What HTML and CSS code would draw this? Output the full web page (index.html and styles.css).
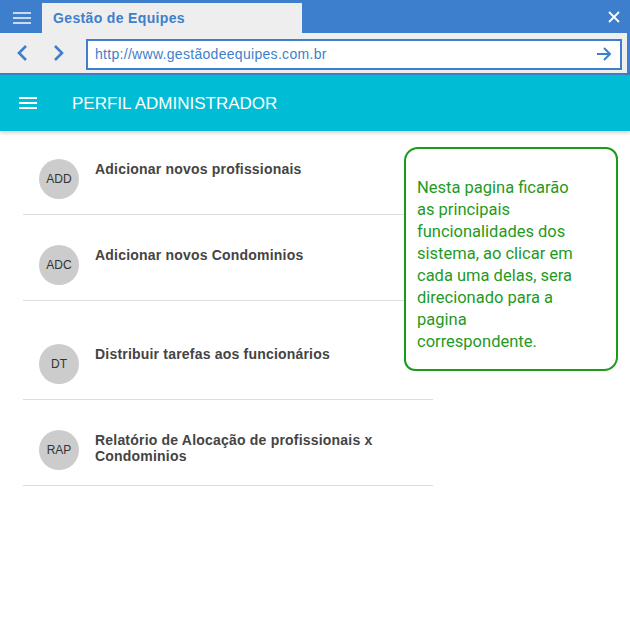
FILE: index.html
```html
<!DOCTYPE html>
<html lang="pt">
<head>
<meta charset="utf-8">
<title>Gestão de Equipes</title>
<link rel="stylesheet" href="styles.css">
</head>
<body>
<div class="window">
  <div class="titlebar">
    <div class="tb-menu">
      <svg width="18" height="12" viewBox="0 0 18 12"><path d="M0 1h18M0 6h18M0 11h18" stroke="#c9daf0" stroke-width="2"/></svg>
    </div>
    <div class="tab">Gestão de Equipes</div>
    <div class="tb-close">
      <svg width="12" height="12" viewBox="0 0 12 12"><path d="M1 1l10 10M11 1L1 11" stroke="#fff" stroke-width="1.8"/></svg>
    </div>
  </div>
  <div class="navbar">
    <div class="nav-btn">
      <svg width="12" height="18" viewBox="0 0 12 18"><path d="M10 2L3 9l7 7" fill="none" stroke="#3d7fcc" stroke-width="2.6"/></svg>
    </div>
    <div class="nav-btn">
      <svg width="12" height="18" viewBox="0 0 12 18"><path d="M2 2l7 7-7 7" fill="none" stroke="#3d7fcc" stroke-width="2.6"/></svg>
    </div>
    <div class="url">
      <span class="url-text">http://www.gestãodeequipes.com.br</span>
      <svg width="16" height="14" viewBox="0 0 16 14"><path d="M1 7h13M8 1l6 6-6 6" fill="none" stroke="#3d7fcc" stroke-width="2"/></svg>
    </div>
  </div>
  <div class="appbar">
    <svg class="app-menu" width="18" height="12" viewBox="0 0 18 12"><path d="M0 1h18M0 6h18M0 11h18" stroke="#fff" stroke-width="2"/></svg>
    <span class="app-title">PERFIL ADMINISTRADOR</span>
  </div>
  <div class="content">
    <ul class="list">
      <li class="item item-a">
        <span class="avatar">ADD</span>
        <span class="label">Adicionar novos profissionais</span>
      </li>
      <li class="item item-b">
        <span class="avatar">ADC</span>
        <span class="label">Adicionar novos Condominios</span>
      </li>
      <li class="item item-c">
        <span class="avatar">DT</span>
        <span class="label">Distribuir tarefas aos funcionários</span>
      </li>
      <li class="item item-b">
        <span class="avatar">RAP</span>
        <span class="label">Relatório de Alocação de profissionais x Condominios</span>
      </li>
    </ul>
    <div class="note">
      <p>Nesta pagina ficarão as principais funcionalidades dos sistema, ao clicar em cada uma delas, sera direcionado para a pagina correspondente.</p>
    </div>
  </div>
</div>
</body>
</html>
```
FILE: styles.css
```css
* { box-sizing: border-box; }
html, body { margin: 0; padding: 0; background: #fff; }
body { font-family: "Liberation Sans", Arial, sans-serif; width: 630px; height: 624px; overflow: hidden; }

.window { width: 630px; height: 624px; position: relative; }

.titlebar {
  height: 33px;
  background: #3d7fcc;
  display: flex;
  align-items: flex-end;
}
.tb-menu { width: 42px; height: 33px; display: flex; align-items: center; justify-content: center; padding-left: 2px; padding-top: 2px; }
.tab {
  width: 260px;
  height: 30px;
  background: #eeeeee;
  color: #3d7fcc;
  font-weight: bold;
  font-size: 14px;
  letter-spacing: 0.35px;
  padding: 7px 0 0 11px;
}
.tb-close { margin-left: auto; width: 30px; height: 33px; display: flex; align-items: center; justify-content: center; padding-right: 2px; }

.navbar {
  height: 42px;
  background: #eeeeee;
  border-right: 3px solid #3d7fcc;
  border-bottom: 2px solid #3d7fcc;
  display: flex;
  align-items: center;
  padding: 2px 5px 0 16px;
}
.nav-btn { width: 37px; display: flex; align-items: center; padding-bottom: 2px; }
.url {
  flex: 1;
  height: 31px;
  margin-left: -4px;
  background: #fff;
  border: 2px solid #3d7fcc;
  display: flex;
  align-items: center;
  padding: 0 8px 0 7px;
}
.url-text { color: #3d7fcc; font-size: 14px; letter-spacing: 0.3px; flex: 1; }

.appbar {
  height: 56px;
  background: #00bcd4;
  display: flex;
  align-items: center;
  box-shadow: 0 2px 4px rgba(0,0,0,0.18);
  position: relative;
  z-index: 1;
}
.app-menu { margin-left: 19px; }
.app-title { color: #fff; font-size: 17px; margin-left: 35px; margin-top: 1px; }

.content { position: relative; }
.list { list-style: none; margin: 0; padding: 0 0 0 23px; width: 433px; }
.item {
  position: relative;
  border-bottom: 1px solid #dddddd;
  padding-left: 16px;
  display: flex;
  align-items: flex-start;
}
.item-a { height: 84px; padding-top: 28px; }
.item-b { height: 86px; padding-top: 30px; }
.item-c { height: 99px; padding-top: 43px; }

.avatar {
  width: 40px; height: 40px;
  border-radius: 50%;
  background: #cccccc;
  color: #333;
  font-size: 12px;
  display: flex; align-items: center; justify-content: center;
  flex: none;
}
.label {
  margin-left: 16px;
  margin-top: 2px;
  font-weight: bold;
  font-size: 14px;
  letter-spacing: 0.2px;
  color: #444;
  line-height: 16px;
  width: 310px;
}

.note {
  position: absolute;
  left: 404px;
  top: 16px;
  width: 214px;
  height: 224px;
  border: 2px solid #1a9c1a;
  border-radius: 14px 12px 14px 11px;
  background: #fff;
  padding: 28px 0 0 11px;
}
.note p {
  margin: 0;
  width: 172px;
  font-family: Roboto, "Liberation Sans", sans-serif;
  font-size: 16.5px;
  line-height: 22px;
  color: #1f9a1f;
}
```
